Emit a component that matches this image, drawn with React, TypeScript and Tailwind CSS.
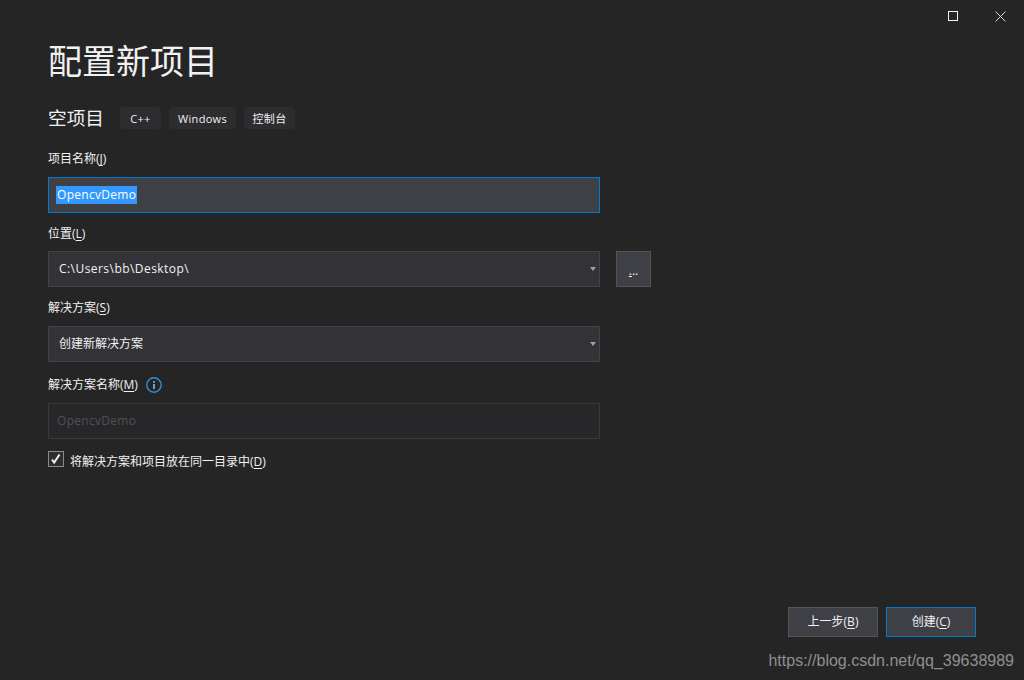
import React from "react";

function Tag({ children, width }: { children: React.ReactNode; width: string }) {
  return (
    <span className={`flex h-[22px] items-center justify-center rounded-[4px] bg-[#2d2d30] text-[11px] leading-none tracking-[0.3px] text-[#f1f1f1] ${width}`}>
      {children}
    </span>
  );
}

function Label({ text, mnemonic }: { text: string; mnemonic: string }) {
  return (
    <span className="text-[12px] leading-[16px] text-[#f1f1f1]">
      {text}(<span className="underline underline-offset-2">{mnemonic}</span>)
    </span>
  );
}

function Caret() {
  return (
    <svg width="6" height="4" viewBox="0 0 6 4">
      <path d="M0 0H6L3 4Z" fill="#a0a0a0" />
    </svg>
  );
}

function Select({ value, latin }: { value: string; latin?: boolean }) {
  return (
    <div className="flex h-[36px] w-[552px] items-center justify-between border border-[#434346] bg-[#333337] pr-[3px] pl-[10px] text-[12px] text-[#f1f1f1]">
      <span className={latin ? "tracking-[0.45px]" : ""}>{value}</span>
      <Caret />
    </div>
  );
}

export default function App() {
  return (
    <div className="relative flex h-[680px] w-[1024px] flex-col overflow-hidden bg-[#252526] font-['Open_Sans','Noto_Sans_CJK_SC',sans-serif] text-[#f1f1f1]">
      <div className="flex h-[32px] justify-end">
        <div className="flex h-[32px] w-[48px] items-center justify-center pl-[2px]">
          <svg width="10" height="10" viewBox="0 0 10 10">
            <rect x="0.5" y="0.5" width="9" height="9" fill="none" stroke="#f1f1f1" strokeWidth="1" />
          </svg>
        </div>
        <div className="flex h-[32px] w-[48px] items-center justify-center">
          <svg width="11" height="11" viewBox="0 0 11 11">
            <path d="M0.5 0.5L10.5 10.5M10.5 0.5L0.5 10.5" fill="none" stroke="#d8d8d8" strokeWidth="1" />
          </svg>
        </div>
      </div>

      <div className="flex flex-1 flex-col px-[48px]">
        <h1 className="mt-[5px] h-[48px] text-[34px] leading-[48px] font-normal text-[#f1f1f1]">配置新项目</h1>

        <div className="mt-[20px] flex h-[26px] items-center">
          <span className="w-[72px] text-[18.67px] leading-[26px]">空项目</span>
          <div className="flex gap-[8px]">
            <Tag width="w-[41px]">C++</Tag>
            <Tag width="w-[67px]">Windows</Tag>
            <Tag width="w-[51px]">控制台</Tag>
          </div>
        </div>

        <div className="mt-[14px] h-[16px]">
          <Label text="项目名称" mnemonic="J" />
        </div>
        <div className="mt-[16px] flex h-[36px] w-[552px] items-center border border-[#007acc] bg-[#3f3f46] pl-[7px] text-[12px]">
          <span className="bg-[#3399ff] px-[1px] tracking-[0.3px] text-white">OpencvDemo</span>
        </div>

        <div className="mt-[7px] h-[16px]">
          <Label text="位置" mnemonic="L" />
        </div>
        <div className="mt-[15px] flex items-start gap-[16px]">
          <Select value="C:\Users\bb\Desktop\" latin />
          <div className="flex h-[36px] w-[35px] items-center justify-center border border-[#555555] bg-[#3f3f46] pt-[3px] text-[12px] leading-none">
            <span className="underline">.</span>..
          </div>
        </div>

        <div className="mt-[7px] h-[16px]">
          <Label text="解决方案" mnemonic="S" />
        </div>
        <div className="mt-[16px]">
          <Select value="创建新解决方案" />
        </div>

        <div className="mt-[14px] flex h-[18px] items-center gap-[8px]">
          <Label text="解决方案名称" mnemonic="M" />
          <svg width="16" height="16" viewBox="0 0 16 16">
            <circle cx="8" cy="8" r="7.2" fill="none" stroke="#2f8fd8" strokeWidth="1.4" />
            <rect x="7.2" y="7" width="1.6" height="5" fill="#75beff" />
            <rect x="7.2" y="4" width="1.6" height="1.7" fill="#75beff" />
          </svg>
        </div>
        <div className="mt-[9px] flex h-[36px] w-[552px] items-center border border-[#3a3a3c] bg-[#27272a] pl-[8px] text-[12px] tracking-[0.3px] text-[#505050]">
          OpencvDemo
        </div>

        <div className="mt-[12px] flex h-[16px] items-start gap-[6px]">
          <div className="flex h-[16px] w-[16px] items-center justify-center border border-[#8a8a8a] bg-[#2d2d30]">
            <svg width="12" height="12" viewBox="0 0 12 12">
              <path d="M2 6.5L4.2 9.5L9.5 1.5" fill="none" stroke="#f1f1f1" strokeWidth="2" />
            </svg>
          </div>
          <div className="-mt-[3px]">
            <Label text="将解决方案和项目放在同一目录中" mnemonic="D" />
          </div>
        </div>

        <div className="mt-auto mb-[43px] flex justify-end gap-[8px]">
          <button className="flex h-[30px] w-[90px] items-center justify-center border border-[#555555] bg-[#3f3f46] text-[12px] text-[#f1f1f1]">
            <span>上一步(<span className="underline underline-offset-2">B</span>)</span>
          </button>
          <button className="flex h-[30px] w-[90px] items-center justify-center border border-[#007acc] bg-[#3f3f46] text-[12px] text-[#f1f1f1]">
            <span>创建(<span className="underline underline-offset-2">C</span>)</span>
          </button>
        </div>
      </div>

      <span className="absolute right-[10px] bottom-[9px] font-['Liberation_Sans',sans-serif] text-[16px] leading-[20px] text-[#8f8f8f]">
        https://blog.csdn.net/qq_39638989
      </span>
    </div>
  );
}
